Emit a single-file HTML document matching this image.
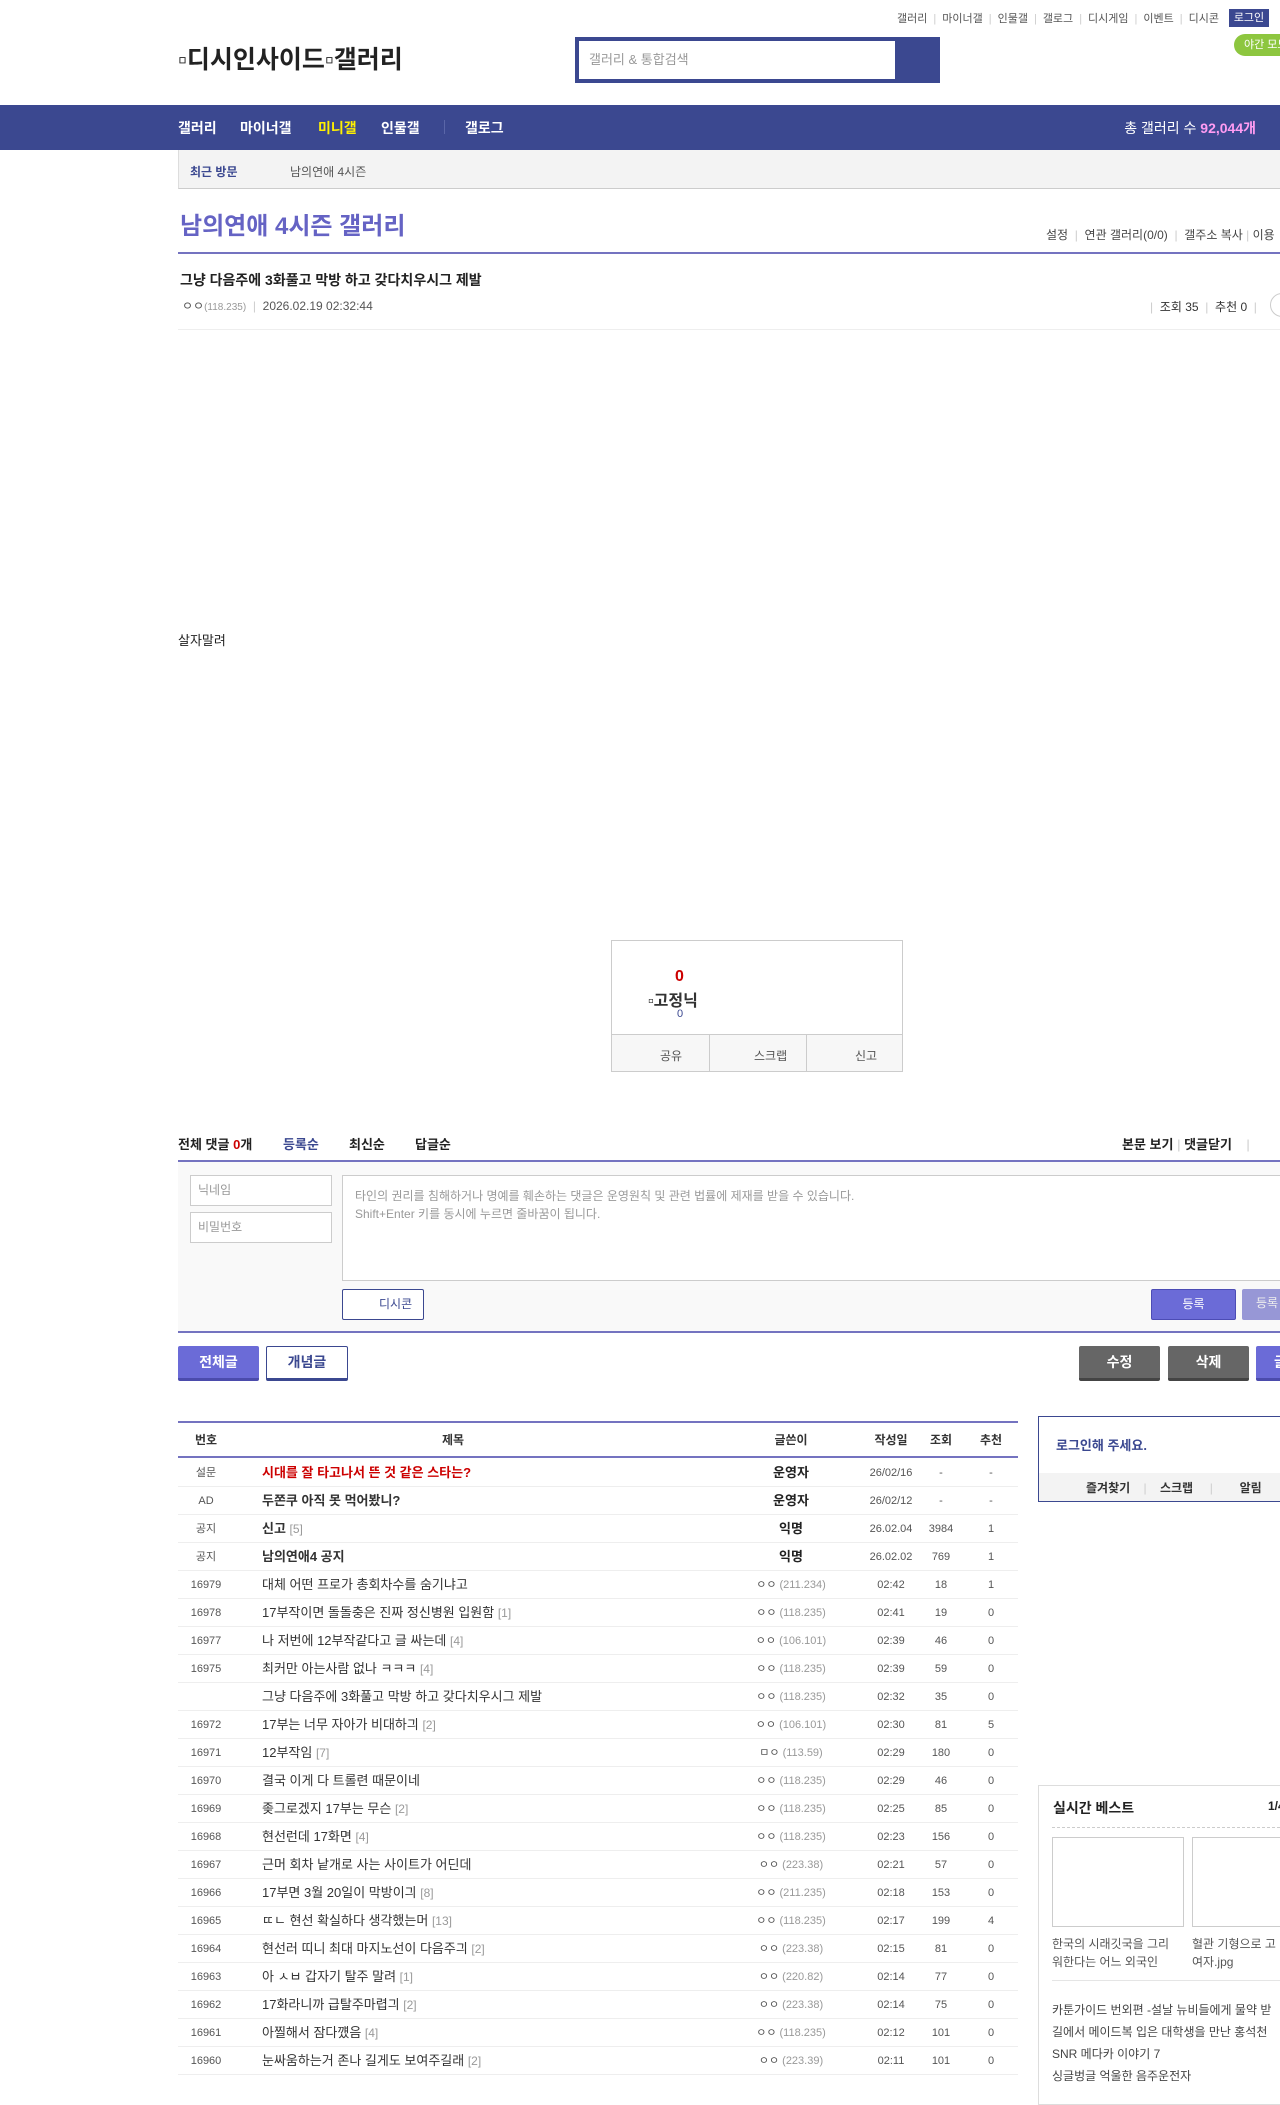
<!DOCTYPE html>
<html><head><meta charset="utf-8">
<style>
*{margin:0;padding:0;box-sizing:border-box}
body{width:1280px;height:2084px;overflow:hidden;background:#fff;font-family:"Liberation Sans","Noto Sans CJK KR",sans-serif;color:#333;position:relative;font-size:12px}
.a{position:absolute;white-space:nowrap}
.toplinks{top:10px;right:58px;font-size:11px;color:#555}
.toplinks span{margin:0 3px}
.sep{color:#ccc}
.nav{top:105px;left:0;width:1280px;height:45px;background:#3b4890}
.row{position:absolute;left:178px;width:840px;height:28px;border-bottom:1px solid #eee;font-size:12px;line-height:28px}
.row div{position:absolute;top:0}
.c1{left:0;width:56px;text-align:center;color:#555;font-size:11px}
.c2{left:84px;color:#333;font-size:13px}
.c3{left:550px;width:126px;text-align:center;font-size:11px;color:#555}
.c4{left:686px;width:54px;text-align:center;font-size:11px;color:#555}
.c5{left:740px;width:46px;text-align:center;font-size:11px;color:#555}
.c6{left:790px;width:46px;text-align:center;font-size:11px;color:#555}
.ip{color:#999}
.cnt{color:#999;font-size:12px}
.b{font-weight:bold}
</style></head><body>

<div class="a toplinks"><span>갤러리</span><span class="sep">|</span><span>마이너갤</span><span class="sep">|</span><span>인물갤</span><span class="sep">|</span><span>갤로그</span><span class="sep">|</span><span>디시게임</span><span class="sep">|</span><span>이벤트</span><span class="sep">|</span><span>디시콘</span></div>
<div class="a" style="left:1229px;top:9px;width:40px;height:18px;background:#3b4890;color:#fff;font-size:11px;text-align:center;line-height:18px">로그인</div>
<div class="a" style="left:1234px;top:34px;width:60px;height:22px;background:#8dc63f;border-radius:11px;color:#fff;font-size:11px;line-height:22px;padding-left:10px">야간 모드</div>

<div class="a" style="left:178px;top:40px;font-size:25px;font-weight:bold;color:#222">▫디시인사이드▫갤러리</div>
<div class="a" style="left:575px;top:37px;width:365px;height:46px;background:#3b4890"></div>
<div class="a" style="left:579px;top:41px;width:316px;height:38px;background:#fff;font-size:13px;color:#999;line-height:38px;padding-left:10px">갤러리 &amp; 통합검색</div>

<div class="a nav"></div>
<div class="a" style="left:178px;top:118px;font-size:14px;font-weight:bold;color:#fff">갤러리</div>
<div class="a" style="left:240px;top:118px;font-size:14px;font-weight:bold;color:#fff">마이너갤</div>
<div class="a" style="left:318px;top:118px;font-size:14px;font-weight:bold;color:#fff000">미니갤</div>
<div class="a" style="left:381px;top:118px;font-size:14px;font-weight:bold;color:#fff">인물갤</div>
<div class="a" style="left:444px;top:120px;width:1px;height:14px;background:#5a66a8"></div>
<div class="a" style="left:465px;top:118px;font-size:14px;font-weight:bold;color:#fff">갤로그</div>
<div class="a" style="right:24px;top:118px;font-size:14px;color:#fff">총 갤러리 수 <b style="color:#ff9cf2">92,044개</b></div>

<div class="a" style="left:178px;top:150px;width:1102px;height:39px;background:#f3f3f3;border-left:1px solid #ddd;border-bottom:1px solid #ccc"></div>
<div class="a" style="left:190px;top:163px;font-size:12px;font-weight:bold;color:#3b4890">최근 방문</div>
<div class="a" style="left:290px;top:163px;font-size:12px;color:#555">남의연애 4시즌</div>

<div class="a" style="left:180px;top:206px;font-size:24px;font-weight:bold;color:#6563c4">남의연애 4시즌 갤러리</div>
<div class="a" style="left:1046px;top:226px;font-size:12px;color:#444">설정 <span class="sep">&nbsp;|&nbsp;</span> 연관 갤러리(0/0) <span class="sep">&nbsp;|&nbsp;</span> 갤주소 복사 <span class="sep">|</span> 이용</div>
<div class="a" style="left:178px;top:252px;width:1102px;height:2px;background:#7473c0"></div>

<div class="a" style="left:180px;top:270px;font-size:14px;font-weight:bold;color:#222">그냥 다음주에 3화풀고 막방 하고 갖다치우시그 제발</div>
<div class="a" style="left:182px;top:297px;font-size:12px;color:#555">ㅇㅇ<span style="color:#999;font-size:10px">(118.235)</span> <span class="sep">&nbsp;|&nbsp;</span> 2026.02.19 02:32:44</div>
<div class="a" style="left:1150px;top:298px;font-size:12px;color:#333"><span class="sep">|</span>&nbsp; 조회 35 &nbsp;<span class="sep">|</span>&nbsp; 추천 0 &nbsp;<span class="sep">|</span></div>
<div class="a" style="left:1270px;top:293px;width:24px;height:24px;border:1px solid #ccc;border-radius:12px"></div>
<div class="a" style="left:178px;top:329px;width:1102px;height:1px;background:#eee"></div>

<div class="a" style="left:178px;top:630px;font-size:13px;color:#222">살자말려</div>

<div class="a" style="left:611px;top:940px;width:292px;height:132px;border:1px solid #ccc;background:#fff"></div>
<div class="a" style="left:675px;top:968px;font-size:16px;font-weight:bold;color:#c00">0</div>
<div class="a" style="left:648px;top:987px;font-size:16px;font-weight:bold;color:#333">▫고정닉</div>
<div class="a" style="left:677px;top:1008px;font-size:11px;color:#3b4890">0</div>
<div class="a" style="left:612px;top:1034px;width:290px;height:37px;background:#f7f7f7;border-top:1px solid #ccc"></div>
<div class="a" style="left:709px;top:1034px;width:1px;height:37px;background:#ccc"></div>
<div class="a" style="left:806px;top:1034px;width:1px;height:37px;background:#ccc"></div>
<div class="a" style="left:660px;top:1047px;font-size:12px;color:#555">공유</div>
<div class="a" style="left:754px;top:1047px;font-size:12px;color:#555">스크랩</div>
<div class="a" style="left:855px;top:1047px;font-size:12px;color:#555">신고</div>

<div class="a" style="left:178px;top:1134px;font-size:13px;font-weight:bold;color:#222">전체 댓글 <span style="color:#c00">0</span>개</div>
<div class="a" style="left:283px;top:1134px;font-size:13px;font-weight:bold;color:#3b4890">등록순</div>
<div class="a" style="left:349px;top:1134px;font-size:13px;font-weight:bold;color:#222">최신순</div>
<div class="a" style="left:415px;top:1134px;font-size:13px;font-weight:bold;color:#222">답글순</div>
<div class="a" style="left:1122px;top:1134px;font-size:13px;font-weight:bold;color:#222">본문 보기 <span class="sep" style="font-weight:normal">|</span> 댓글닫기 &nbsp;&nbsp;&nbsp;<span class="sep" style="font-weight:normal">|</span></div>
<div class="a" style="left:178px;top:1160px;width:1102px;height:2px;background:#7473c0"></div>
<div class="a" style="left:178px;top:1162px;width:1102px;height:169px;background:#f9f9f9"></div>
<div class="a" style="left:190px;top:1175px;width:142px;height:31px;border:1px solid #ccc;background:#fff;font-size:12px;color:#999;line-height:29px;padding-left:7px">닉네임</div>
<div class="a" style="left:190px;top:1212px;width:142px;height:31px;border:1px solid #ccc;background:#fff;font-size:12px;color:#999;line-height:29px;padding-left:7px">비밀번호</div>
<div class="a" style="left:342px;top:1175px;width:950px;height:106px;border:1px solid #ccc;background:#fff;font-size:12px;color:#999;padding:11px 12px;line-height:18px;white-space:normal">타인의 권리를 침해하거나 명예를 훼손하는 댓글은 운영원칙 및 관련 법률에 제재를 받을 수 있습니다.<br>Shift+Enter 키를 동시에 누르면 줄바꿈이 됩니다.</div>
<div class="a" style="left:342px;top:1289px;width:82px;height:31px;border:1px solid #3b4890;border-radius:2px;background:#fff;color:#3b4890;font-size:12px;line-height:29px;padding-left:36px">디시콘</div>
<div class="a" style="left:1151px;top:1289px;width:85px;height:31px;background:#6b6bd7;border:1px solid #4c4cb5;border-radius:2px;color:#fff;font-size:12px;text-align:center;line-height:29px">등록</div>
<div class="a" style="left:1242px;top:1289px;width:60px;height:31px;background:#9797d6;border-radius:2px;color:#eee;font-size:12px;line-height:29px;padding-left:14px">등록</div>
<div class="a" style="left:178px;top:1331px;width:1102px;height:2px;background:#7473c0"></div>

<div class="a" style="left:178px;top:1346px;width:81px;height:35px;background:#6b6bd7;border-bottom:3px solid #4b4bac;border-radius:2px;color:#fff;font-size:14px;font-weight:bold;text-align:center;line-height:33px">전체글</div>
<div class="a" style="left:266px;top:1346px;width:82px;height:35px;background:#fff;border:1px solid #3b4890;border-bottom:3px solid #3b4890;border-radius:2px;color:#3b4890;font-size:14px;font-weight:bold;text-align:center;line-height:31px">개념글</div>
<div class="a" style="left:1079px;top:1346px;width:81px;height:35px;background:#666;border-bottom:3px solid #444;border-radius:2px;color:#fff;font-size:14px;font-weight:bold;text-align:center;line-height:33px">수정</div>
<div class="a" style="left:1168px;top:1346px;width:81px;height:35px;background:#666;border-bottom:3px solid #444;border-radius:2px;color:#fff;font-size:14px;font-weight:bold;text-align:center;line-height:33px">삭제</div>
<div class="a" style="left:1256px;top:1346px;width:60px;height:35px;background:#6b6bd7;border-bottom:3px solid #4b4bac;border-radius:2px;color:#fff;font-size:14px;font-weight:bold;line-height:33px;padding-left:18px">글쓰기</div>

<div class="a" style="left:178px;top:1421px;width:840px;height:2px;background:#7473c0"></div>
<div class="row" style="top:1423px;height:35px;line-height:35px;border-bottom:2px solid #7473c0;font-weight:bold">
<div class="c1" style="font-size:12px;color:#333">번호</div><div style="left:0;width:550px;text-align:center;font-size:12px">제목</div><div class="c3" style="font-size:12px;color:#333">글쓴이</div><div class="c4" style="font-size:12px;color:#333">작성일</div><div class="c5" style="font-size:12px;color:#333">조회</div><div class="c6" style="font-size:12px;color:#333">추천</div></div>

<div class="row" style="top:1459px"><div class="c1">설문</div><div class="c2 b" style="color:#c00">시대를 잘 타고나서 뜬 것 같은 스타는?</div><div class="c3 b" style="font-size:13px;color:#222">운영자</div><div class="c4">26/02/16</div><div class="c5">-</div><div class="c6">-</div></div>
<div class="row" style="top:1487px"><div class="c1">AD</div><div class="c2 b">두쫀쿠 아직 못 먹어봤니?</div><div class="c3 b" style="font-size:13px;color:#222">운영자</div><div class="c4">26/02/12</div><div class="c5">-</div><div class="c6">-</div></div>
<div class="row" style="top:1515px"><div class="c1">공지</div><div class="c2"><b>신고</b> <span class="cnt">[5]</span></div><div class="c3 b" style="font-size:13px;color:#222">익명</div><div class="c4">26.02.04</div><div class="c5">3984</div><div class="c6">1</div></div>
<div class="row" style="top:1543px"><div class="c1">공지</div><div class="c2 b">남의연애4 공지</div><div class="c3 b" style="font-size:13px;color:#222">익명</div><div class="c4">26.02.02</div><div class="c5">769</div><div class="c6">1</div></div>
<div class="row" style="top:1571px"><div class="c1">16979</div><div class="c2">대체 어떤 프로가 총회차수를 숨기냐고</div><div class="c3">ㅇㅇ <span class="ip">(211.234)</span></div><div class="c4">02:42</div><div class="c5">18</div><div class="c6">1</div></div>
<div class="row" style="top:1599px"><div class="c1">16978</div><div class="c2">17부작이면 돌돌충은 진짜 정신병원 입원함 <span class="cnt">[1]</span></div><div class="c3">ㅇㅇ <span class="ip">(118.235)</span></div><div class="c4">02:41</div><div class="c5">19</div><div class="c6">0</div></div>
<div class="row" style="top:1627px"><div class="c1">16977</div><div class="c2">나 저번에 12부작같다고 글 싸는데 <span class="cnt">[4]</span></div><div class="c3">ㅇㅇ <span class="ip">(106.101)</span></div><div class="c4">02:39</div><div class="c5">46</div><div class="c6">0</div></div>
<div class="row" style="top:1655px"><div class="c1">16975</div><div class="c2">최커만 아는사람 없나 ㅋㅋㅋ <span class="cnt">[4]</span></div><div class="c3">ㅇㅇ <span class="ip">(118.235)</span></div><div class="c4">02:39</div><div class="c5">59</div><div class="c6">0</div></div>
<div class="row" style="top:1683px"><div class="c1"></div><div class="c2">그냥 다음주에 3화풀고 막방 하고 갖다치우시그 제발</div><div class="c3">ㅇㅇ <span class="ip">(118.235)</span></div><div class="c4">02:32</div><div class="c5">35</div><div class="c6">0</div></div>
<div class="row" style="top:1711px"><div class="c1">16972</div><div class="c2">17부는 너무 자아가 비대하긔 <span class="cnt">[2]</span></div><div class="c3">ㅇㅇ <span class="ip">(106.101)</span></div><div class="c4">02:30</div><div class="c5">81</div><div class="c6">5</div></div>
<div class="row" style="top:1739px"><div class="c1">16971</div><div class="c2">12부작임 <span class="cnt">[7]</span></div><div class="c3">ㅁㅇ <span class="ip">(113.59)</span></div><div class="c4">02:29</div><div class="c5">180</div><div class="c6">0</div></div>
<div class="row" style="top:1767px"><div class="c1">16970</div><div class="c2">결국 이게 다 트롤련 때문이네</div><div class="c3">ㅇㅇ <span class="ip">(118.235)</span></div><div class="c4">02:29</div><div class="c5">46</div><div class="c6">0</div></div>
<div class="row" style="top:1795px"><div class="c1">16969</div><div class="c2">좆그로겠지 17부는 무슨 <span class="cnt">[2]</span></div><div class="c3">ㅇㅇ <span class="ip">(118.235)</span></div><div class="c4">02:25</div><div class="c5">85</div><div class="c6">0</div></div>
<div class="row" style="top:1823px"><div class="c1">16968</div><div class="c2">현선런데 17화면 <span class="cnt">[4]</span></div><div class="c3">ㅇㅇ <span class="ip">(118.235)</span></div><div class="c4">02:23</div><div class="c5">156</div><div class="c6">0</div></div>
<div class="row" style="top:1851px"><div class="c1">16967</div><div class="c2">근머 회차 낱개로 사는 사이트가 어딘데</div><div class="c3">ㅇㅇ <span class="ip">(223.38)</span></div><div class="c4">02:21</div><div class="c5">57</div><div class="c6">0</div></div>
<div class="row" style="top:1879px"><div class="c1">16966</div><div class="c2">17부면 3월 20일이 막방이긔 <span class="cnt">[8]</span></div><div class="c3">ㅇㅇ <span class="ip">(211.235)</span></div><div class="c4">02:18</div><div class="c5">153</div><div class="c6">0</div></div>
<div class="row" style="top:1907px"><div class="c1">16965</div><div class="c2">ㄸㄴ 현선 확실하다 생각했는머 <span class="cnt">[13]</span></div><div class="c3">ㅇㅇ <span class="ip">(118.235)</span></div><div class="c4">02:17</div><div class="c5">199</div><div class="c6">4</div></div>
<div class="row" style="top:1935px"><div class="c1">16964</div><div class="c2">현선러 띠니 최대 마지노선이 다음주긔 <span class="cnt">[2]</span></div><div class="c3">ㅇㅇ <span class="ip">(223.38)</span></div><div class="c4">02:15</div><div class="c5">81</div><div class="c6">0</div></div>
<div class="row" style="top:1963px"><div class="c1">16963</div><div class="c2">아 ㅅㅂ 갑자기 탈주 말려 <span class="cnt">[1]</span></div><div class="c3">ㅇㅇ <span class="ip">(220.82)</span></div><div class="c4">02:14</div><div class="c5">77</div><div class="c6">0</div></div>
<div class="row" style="top:1991px"><div class="c1">16962</div><div class="c2">17화라니까 급탈주마렵긔 <span class="cnt">[2]</span></div><div class="c3">ㅇㅇ <span class="ip">(223.38)</span></div><div class="c4">02:14</div><div class="c5">75</div><div class="c6">0</div></div>
<div class="row" style="top:2019px"><div class="c1">16961</div><div class="c2">아찔해서 잠다꺴음 <span class="cnt">[4]</span></div><div class="c3">ㅇㅇ <span class="ip">(118.235)</span></div><div class="c4">02:12</div><div class="c5">101</div><div class="c6">0</div></div>
<div class="row" style="top:2047px"><div class="c1">16960</div><div class="c2">눈싸움하는거 존나 길게도 보여주길래 <span class="cnt">[2]</span></div><div class="c3">ㅇㅇ <span class="ip">(223.39)</span></div><div class="c4">02:11</div><div class="c5">101</div><div class="c6">0</div></div>

<div class="a" style="left:1038px;top:1416px;width:260px;height:86px;border:1px solid #3b4890"></div>
<div class="a" style="left:1039px;top:1473px;width:250px;height:28px;background:#f3f3f3"></div>
<div class="a" style="left:1056px;top:1435px;font-size:13px;font-weight:bold;color:#3b4890">로그인해 주세요.</div>
<div class="a" style="left:1086px;top:1479px;font-size:12px;font-weight:bold;color:#333">즐겨찾기 &nbsp;&nbsp;&nbsp;<span class="sep" style="font-weight:normal">|</span>&nbsp;&nbsp;&nbsp; 스크랩 &nbsp;&nbsp;&nbsp;&nbsp;<span class="sep" style="font-weight:normal">|</span>&nbsp;&nbsp;&nbsp;&nbsp;&nbsp;&nbsp;&nbsp; 알림</div>

<div class="a" style="left:1038px;top:1785px;width:260px;height:320px;border:1px solid #ddd"></div>
<div class="a" style="left:1053px;top:1798px;font-size:14px;font-weight:bold;color:#222">실시간 베스트</div>
<div class="a" style="left:1268px;top:1799px;font-size:12px;font-weight:bold;color:#222">1/4</div>
<div class="a" style="left:1052px;top:1827px;width:228px;border-top:1px dashed #ccc"></div>
<div class="a" style="left:1052px;top:1837px;width:132px;height:90px;border:1px solid #ccc"></div>
<div class="a" style="left:1192px;top:1837px;width:132px;height:90px;border:1px solid #ccc"></div>
<div class="a" style="left:1052px;top:1935px;font-size:12px;color:#555;line-height:18px">한국의 시래깃국을 그리<br>워한다는 어느 외국인</div>
<div class="a" style="left:1192px;top:1935px;font-size:12px;color:#555;line-height:18px">혈관 기형으로 고<br>여자.jpg</div>
<div class="a" style="left:1052px;top:1980px;width:228px;height:1px;background:#e5e5e5"></div>
<div class="a" style="left:1052px;top:1999px;font-size:12px;color:#444;line-height:22px">카툰가이드 번외편 -설날 뉴비들에게 물약 받<br>길에서 메이드복 입은 대학생을 만난 홍석천<br>SNR 메다카 이야기 7<br>싱글벙글 억울한 음주운전자</div>

</body></html>
